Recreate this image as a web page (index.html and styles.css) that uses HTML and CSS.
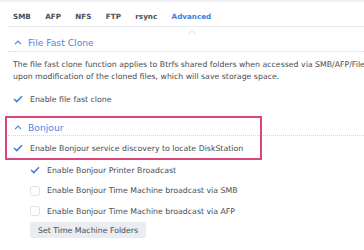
FILE: index.html
```html
<!DOCTYPE html>
<html lang="en">
<head>
    <meta charset="UTF-8">
    <meta name="viewport" content="width=device-width, initial-scale=1.0">
    <title>File Services</title>
    <link rel="stylesheet" href="styles.css">
</head>
<body>
<div class="topbar"></div>
<div class="page">
    <div class="tabs">
        <span class="tab">SMB</span>
        <span class="tab">AFP</span>
        <span class="tab">NFS</span>
        <span class="tab">FTP</span>
        <span class="tab">rsync</span>
        <span class="tab active">Advanced</span>
    </div>

    <div class="section">
        <div class="section-head">
            <svg class="chevron" width="8" height="5" viewBox="0 0 8 5"><path d="M1 4.2 L4 1.2 L7 4.2" fill="none" stroke="#4a86e8" stroke-width="1.2"/></svg>
            <span>File Fast Clone</span>
        </div>
        <p class="desc">The file fast clone function applies to Btrfs shared folders when accessed via SMB/AFP/File Station<br>upon modification of the cloned files, which will save storage space.</p>
        <label class="check-row">
            <span class="box checked"><svg width="10" height="8" viewBox="0 0 10 8"><path d="M1 4 L3.8 6.6 L9 1.2" fill="none" stroke="#3d7fe0" stroke-width="1.5"/></svg></span>
            Enable file fast clone
        </label>
    </div>

    <div class="section bonjour">
        <div class="highlight"></div>
        <div class="section-head">
            <svg class="chevron" width="8" height="5" viewBox="0 0 8 5"><path d="M1 4.2 L4 1.2 L7 4.2" fill="none" stroke="#4a86e8" stroke-width="1.2"/></svg>
            <span>Bonjour</span>
        </div>
        <label class="check-row first">
            <span class="box checked"><svg width="10" height="8" viewBox="0 0 10 8"><path d="M1 4 L3.8 6.6 L9 1.2" fill="none" stroke="#3d7fe0" stroke-width="1.5"/></svg></span>
            Enable Bonjour service discovery to locate DiskStation
        </label>
        <div class="sub-options">
            <label class="check-row">
                <span class="box checked"><svg width="10" height="8" viewBox="0 0 10 8"><path d="M1 4 L3.8 6.6 L9 1.2" fill="none" stroke="#3d7fe0" stroke-width="1.5"/></svg></span>
                Enable Bonjour Printer Broadcast
            </label>
            <label class="check-row">
                <span class="box"></span>
                Enable Bonjour Time Machine broadcast via SMB
            </label>
            <label class="check-row">
                <span class="box"></span>
                Enable Bonjour Time Machine broadcast via AFP
            </label>
            <button class="plain-button">Set Time Machine Folders</button>
        </div>
    </div>
</div>
</body>
</html>
```

FILE: styles.css
```css
* {
    margin: 0;
    padding: 0;
    box-sizing: border-box;
}

body {
    background: #fff;
    font-family: "DejaVu Sans", Verdana, sans-serif;
    font-size: 7.8px;
    color: #474c52;
    overflow: hidden;
}

.topbar {
    height: 2px;
    background: #eef0f3;
}

.page {
    padding-left: 8px;
}

.tabs {
    display: flex;
    gap: 14.4px;
    height: 25px;
    padding: 10px 0 0 5px;
    border-bottom: 1px solid #e7e9ec;
}

.tab {
    font-weight: bold;
    font-size: 7.2px;
    line-height: 9px;
    color: #4b5058;
    position: relative;
}

.tab.active {
    color: #3d7fe0;
}

.tab.active::after {
    content: "";
    position: absolute;
    left: 50%;
    bottom: -11px;
    width: 5px;
    height: 5px;
    margin-left: -2px;
    background: #fff;
    border-left: 1px solid #e7e9ec;
    border-top: 1px solid #e7e9ec;
    transform: rotate(45deg);
}

.section {
    position: relative;
}

.section-head {
    display: flex;
    align-items: center;
    gap: 6px;
    height: 25px;
    padding: 6px 0 0 6px;
    border-bottom: 1px dotted #d4d8dc;
    color: #4a86e8;
    font-size: 9.2px;
}

.bonjour {
    margin-top: 5px;
}

.bonjour .section-head {
    height: 24px;
    padding-top: 7px;
}

.desc {
    padding: 7px 0 0 5px;
    line-height: 12px;
    white-space: nowrap;
}

.check-row {
    display: flex;
    align-items: center;
    gap: 7px;
    height: 16px;
    padding-left: 5px;
    margin-top: 8px;
}

.check-row.first {
    margin-top: 4px;
}

.box {
    width: 10px;
    height: 10px;
    border: 1px solid #dfe3e8;
    border-radius: 3px;
    display: flex;
    align-items: center;
    justify-content: center;
}

.box.checked {
    border: none;
}

.sub-options {
    padding-left: 17px;
    margin-top: 6px;
    display: flex;
    flex-direction: column;
    align-items: flex-start;
}

.sub-options .check-row {
    margin-top: 4.5px;
}

.sub-options .check-row:first-child {
    margin-top: 0;
}

.plain-button {
    margin: 3px 0 0 5px;
    height: 16px;
    padding: 0 8px;
    border: none;
    border-radius: 3px;
    background: #e9edf1;
    color: #474c52;
    font-family: "DejaVu Sans", Verdana, sans-serif;
    font-size: 7.8px;
}

.highlight {
    position: absolute;
    left: -3px;
    top: 4px;
    width: 257px;
    height: 44px;
    border: 2px solid #d9467a;
    pointer-events: none;
}
```
